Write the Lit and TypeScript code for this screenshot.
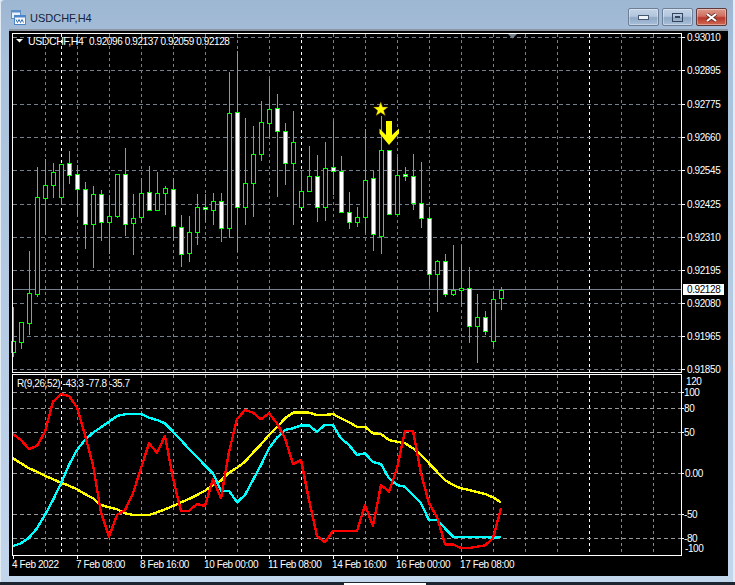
import { LitElement, html, svg, css } from 'lit';
import { customElement } from 'lit/decorators.js';

// [high, low, bodyTop, bodyBottom, bearish] per bar, 8px apart starting at x=13
const BARS: [number, number, number, number, number][] = [
  [307, 357, 341, 352, 0], [322, 349, 322, 342, 0], [251, 335, 293, 323, 0], [167, 297, 197, 294, 0],
  [159, 235, 185, 198, 0], [163, 198, 172, 185, 0], [164, 205, 164, 197, 0], [151, 184, 163, 175, 1],
  [165, 217, 174, 189, 1], [182, 249, 189, 224, 1], [186, 268, 194, 224, 0], [190, 241, 194, 222, 1],
  [195, 254, 216, 222, 0], [174, 218, 174, 216, 0], [148, 236, 174, 224, 1], [194, 255, 218, 223, 0],
  [178, 223, 193, 217, 0], [166, 210, 192, 210, 1], [172, 210, 193, 210, 0], [186, 215, 188, 193, 0],
  [178, 241, 189, 226, 1], [215, 267, 227, 254, 1], [216, 262, 232, 253, 0], [194, 245, 207, 232, 0],
  [194, 222, 207, 209, 1], [193, 225, 201, 210, 0], [193, 242, 201, 228, 1], [72, 238, 113, 228, 0],
  [51, 252, 112, 207, 1], [118, 225, 183, 207, 0], [126, 217, 154, 183, 0], [101, 161, 122, 154, 0],
  [79, 137, 109, 123, 0], [94, 197, 108, 131, 1], [123, 185, 131, 163, 1], [111, 225, 142, 163, 0],
  [171, 207, 191, 207, 0], [146, 192, 176, 191, 0], [155, 222, 176, 207, 1], [142, 221, 168, 207, 0],
  [121, 195, 167, 171, 1], [156, 212, 171, 212, 1], [192, 229, 212, 222, 1], [207, 227, 217, 222, 0],
  [129, 233, 180, 217, 0], [171, 251, 178, 234, 1], [116, 254, 150, 236, 0], [150, 214, 150, 214, 1],
  [157, 215, 175, 214, 0], [167, 181, 174, 176, 1], [154, 210, 176, 203, 1], [162, 228, 203, 218, 1],
  [207, 286, 218, 274, 1], [260, 312, 261, 274, 0], [254, 297, 261, 294, 1], [245, 296, 290, 294, 0],
  [245, 306, 288, 290, 0], [267, 343, 288, 326, 1], [294, 363, 317, 326, 0], [311, 335, 317, 331, 1],
  [291, 347, 299, 341, 0], [287, 310, 290, 298, 0],
];

// indicator lines, y values per bar as read at 3x (y = 390 + v / 3)
const RED = [132, 150, 177, 168, 125, 35, 12, 18, 52, 135, 225, 368, 440, 375, 360, 310, 235, 160, 188, 138, 265, 362, 362, 342, 348, 268, 325, 185, 88, 60, 68, 88, 70, 100, 145, 222, 210, 330, 438, 457, 423, 423, 423, 423, 345, 408, 285, 305, 235, 123, 122, 250, 340, 380, 463, 463, 474, 474, 470, 466, 445, 355];
const CYAN = [468, 460, 443, 415, 375, 330, 280, 225, 180, 150, 128, 112, 95, 78, 73, 71, 72, 83, 90, 100, 125, 150, 177, 200, 227, 250, 302, 302, 337, 315, 270, 225, 175, 143, 120, 115, 106, 106, 126, 104, 106, 145, 165, 195, 190, 216, 222, 265, 285, 290, 315, 340, 390, 390, 415, 440, 441, 441, 441, 441, 443, 441];
const YELLOW = [205, 220, 235, 245, 257, 268, 278, 287, 298, 312, 325, 345, 352, 358, 370, 375, 375, 375, 367, 358, 348, 337, 327, 315, 302, 285, 272, 248, 233, 215, 188, 163, 135, 112, 85, 68, 67, 68, 75, 75, 72, 85, 97, 110, 110, 130, 132, 150, 155, 160, 175, 195, 220, 245, 270, 285, 295, 300, 306, 312, 322, 337];

const GRID_X = [45, 77, 109, 141, 173, 205, 237, 269, 333, 365, 397, 429, 461, 493, 525, 557, 621, 653];
const SEP_X = [61, 301, 589];
const PRICES: [number, string][] = [
  [37, '0.93010'], [70, '0.92895'], [104, '0.92775'], [137, '0.92660'], [170, '0.92545'], [204, '0.92425'],
  [237, '0.92310'], [270, '0.92195'], [303, '0.92080'], [336, '0.91965'], [369, '0.91850'],
];
const LEVELS: [number, string][] = [[392, '100'], [408, '80'], [432, '50'], [473, '0.00'], [514, '-50'], [538, '-80']];
const DATES: [number, string][] = [
  [13, '4 Feb 2022'], [77, '7 Feb 08:00'], [141, '8 Feb 16:00'], [205, '10 Feb 00:00'], [269, '11 Feb 08:00'],
  [333, '14 Feb 16:00'], [397, '16 Feb 00:00'], [461, '17 Feb 08:00'],
];

const pts = (vals: number[]) => vals.map((v, i) => `${13 + i * 8},${(390 + v / 3).toFixed(1)}`).join(' ');

@customElement('app-root')
export class AppRoot extends LitElement {
  static styles = css`
    :host {
      display: block;
      width: 735px;
      height: 585px;
      overflow: hidden;
      background: #e8eef5;
      font-family: "Liberation Sans", Arial, sans-serif;
    }
    .window {
      position: relative;
      height: 585px;
      display: flex;
      flex-direction: column;
      box-sizing: border-box;
      border-top-left-radius: 4px;
      border-bottom: 3px solid #1c2430;
      background: linear-gradient(#9db6d2 0, #a9c1db 60px, #c2d6ec 585px);
      box-shadow: inset 1px 0 0 #e3ebf4, inset -2px 0 0 #e3ebf4;
    }
    .taskbar-gap {
      position: absolute;
      left: 344px;
      bottom: -3px;
      width: 82px;
      height: 2px;
      background: #fff;
    }
    .titlebar {
      height: 29px;
      flex: none;
      display: flex;
      align-items: center;
      gap: 4px;
      box-sizing: border-box;
      padding: 6px 8px 0 11px;
      color: #14243a;
      font-size: 11px;
    }
    .title { flex: 1; }
    .controls { display: flex; gap: 3px; align-self: flex-start; margin-top: 2px; }
    .btn {
      width: 31px;
      height: 18px;
      box-sizing: border-box;
      display: flex;
      align-items: center;
      justify-content: center;
      border: 1px solid #6d7f96;
      border-radius: 2px;
      background: linear-gradient(#c3d3e6 0, #b2c6dd 45%, #8fa8c4 55%, #a9c0da 100%);
      box-shadow: inset 0 0 0 1px rgba(255, 255, 255, .35);
    }
    .btn.close {
      border-color: #5f3a3a;
      background: linear-gradient(#dc9a8c 0, #cf6f60 45%, #b9362a 55%, #cf6a55 100%);
    }
    .client {
      flex: none;
      margin: 0 7px 0 9px;
      background: #000;
      border-top: 2px solid #8d97a3;
    }
    svg.chart { display: block; }
    text {
      font-family: "Liberation Sans", Arial, sans-serif;
      font-size: 10px;
      letter-spacing: -0.4px;
      fill: #fff;
    }
    .lines { shape-rendering: crispEdges; }
  `;

  private renderBar(b: [number, number, number, number, number], i: number) {
    const x = 13 + i * 8;
    const [hi, lo, top, bottom, bear] = b;
    return svg`
      <line x1=${x + 0.5} x2=${x + 0.5} y1=${hi} y2=${lo} stroke="#00ff00" />
      <rect x=${x - 1.5} y=${top + 0.5} width="4" height=${Math.max(bottom - top, 1)}
        fill=${bear ? '#fff' : '#000'} stroke="#00ff00" />`;
  }

  render() {
    return html`
      <div class="window">
        <div class="titlebar">
          <svg width="15" height="15" viewBox="0 0 15 15">
            <rect x="0.5" y="0.5" width="9" height="8" fill="#e9f1fa" stroke="#5c8fc8" />
            <rect x="0.5" y="0.5" width="9" height="2" fill="#5c8fc8" />
            <rect x="3.500" y="5.500" width="11" height="9" fill="#f6fafe" stroke="#4c86c8" />
            <rect x="3.500" y="5.500" width="11" height="2" fill="#4c86c8" />
            <path d="M5 9.500l1.500 3 1.500-3 1.500 3 1.500-3 1.500 3" fill="none" stroke="#3a6fb0" />
          </svg>
          <span class="title">USDCHF,H4</span>
          <div class="controls">
            <div class="btn">
              <svg width="11" height="5"><rect x="0.5" y="0.5" width="10" height="4" fill="#eef3f8" stroke="#46586e" /></svg>
            </div>
            <div class="btn">
              <svg width="11" height="9"><rect x="0.5" y="0.5" width="10" height="8" fill="none" stroke="#33455c" /><rect x="3" y="3" width="5" height="2" fill="#33455c" /></svg>
            </div>
            <div class="btn close">
              <svg width="13" height="9" viewBox="0 0 13 9"><path d="M2 1l9 7M11 1l-9 7" stroke="#5c2a22" stroke-width="3.600" /><path d="M2 1l9 7M11 1l-9 7" stroke="#fff" stroke-width="2.200" /></svg>
            </div>
          </div>
        </div>
        <div class="client">${this.renderChart()}</div>
        <div class="taskbar-gap"></div>
      </div>
    `;
  }

  private renderChart() {
    const grid = '#75808f';
    return html`
      <svg class="chart" width="719" height="545" viewBox="9 31 719 545" shape-rendering="crispEdges">
        <!-- main pane grid -->
        ${GRID_X.map((x) => svg`<line x1=${x + 0.5} x2=${x + 0.5} y1="34" y2="372" stroke=${grid} stroke-dasharray="3 3" />`)}
        ${SEP_X.map((x) => svg`<line x1=${x + 0.5} x2=${x + 0.5} y1="34" y2="372" stroke="#fff" stroke-dasharray="3 3" />`)}
        ${PRICES.map(([y]) => svg`<line x1="13" x2="681" y1=${y + 0.5} y2=${y + 0.5} stroke=${grid} stroke-dasharray="4 3" />`)}
        <!-- indicator pane grid -->
        ${GRID_X.map((x) => svg`<line x1=${x + 0.5} x2=${x + 0.5} y1="375" y2="555" stroke="#80868e" stroke-dasharray="3 3" />`)}
        ${SEP_X.map((x) => svg`<line x1=${x + 0.5} x2=${x + 0.5} y1="375" y2="555" stroke="#fff" stroke-dasharray="3 3" />`)}
        ${LEVELS.map(([y]) => svg`<line x1="13" x2="681" y1=${y + 0.5} y2=${y + 0.5} stroke="#9a9a9a" stroke-dasharray="4 3" />`)}

        <line x1="13" x2="681" y1="289.5" y2="289.5" stroke="#75808f" />
        ${BARS.map((b, i) => this.renderBar(b, i))}

        <!-- pane borders and axes -->
        <path d="M12.5 372.5V33.5H681.5V372.5H12.5" fill="none" stroke="#fff" />
        <path d="M12.5 555.5V374.5H681.5V555.5H12.5" fill="none" stroke="#fff" />
        ${PRICES.map(([y]) => svg`<line x1="682" x2="685" y1=${y + 0.5} y2=${y + 0.5} stroke="#fff" />`)}
        ${LEVELS.map(([y]) => svg`<line x1="682" x2="684" y1=${y + 0.5} y2=${y + 0.5} stroke="#fff" />`)}
        ${DATES.map(([x]) => svg`<line x1=${x + 0.5} x2=${x + 0.5} y1="556" y2="559" stroke="#fff" />`)}
        <path d="M508 34h9l-4.500 4.500z" fill="#75808f" shape-rendering="auto" />

        <!-- indicator lines -->
        <g class="lines" fill="none" stroke-width="2.400" stroke-linejoin="round">
          <polyline points=${pts(YELLOW)} stroke="#ffff00" />
          <polyline points=${pts(CYAN)} stroke="#00ffff" />
          <polyline points=${pts(RED)} stroke="#ff0000" />
        </g>

        <!-- objects -->
        <g shape-rendering="auto">
          <path d="M380.700 102l1.900 5.100h5.400l-4.300 3.300 1.600 5.200-4.600-3.100-4.600 3.100 1.600-5.200-4.300-3.300h5.400z" fill="#ffff00" stroke="#8a5a00" stroke-width=".4" />
          <path d="M386 121h6v14l7-6.500v5l-10 11.500-9.500-11.500v-5l6.500 6.500z" fill="#ffff00" />
        </g>

        <!-- legends -->
        <path d="M16 39h7l-3.500 3.500z" fill="#fff" shape-rendering="auto" />
        <text x="28" y="45" style="font-size:10.500px">USDCHF,H4</text>
        <text x="89" y="45">0.92096 0.92137 0.92059 0.92128</text>
        <text x="17" y="387">R(9,26,52) -43.3 -77.8 -35.7</text>

        <!-- axis labels -->
        ${PRICES.map(([y, t]) => svg`<text x="687" y=${y + 4}>${t}</text>`)}
        <rect x="683" y="284" width="41" height="11" fill="#fff" />
        <text x="687" y="293" style="fill:#000">0.92128</text>
        <text x="686" y="385">120</text>
        ${LEVELS.map(([y, t]) => svg`<text x=${t === '0.00' ? 685 : 684} y=${y + 4}>${t}</text>`)}
        <text x="685" y="552">-100</text>
        ${DATES.map(([x, t]) => svg`<text x=${x - 1} y="568">${t}</text>`)}
      </svg>
    `;
  }
}
